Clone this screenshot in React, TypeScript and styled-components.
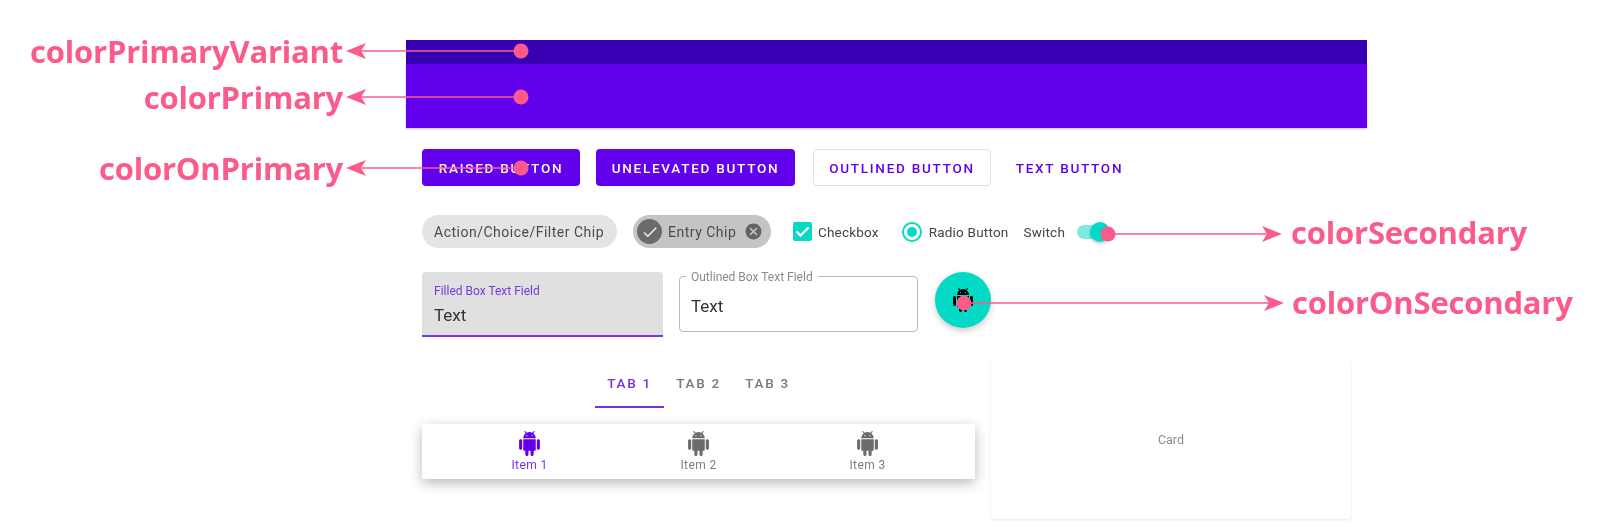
import React from 'react';
import styled, { createGlobalStyle } from 'styled-components';
import { MdCancel, MdCheck } from 'react-icons/md';

const PRIMARY = '#6200ee';
const PRIMARY_VARIANT = '#3700b3';
const SECONDARY = '#03dac5';
const PINK = '#fb5b8a';

const GlobalStyle = createGlobalStyle`
	html, body {
		margin: 0;
		padding: 0;
		background: #fff;
	}
	* {
		box-sizing: border-box;
	}
`;

const Page = styled.div`
	position: relative;
	display: flex;
	width: 1600px;
	height: 527px;
	padding-top: 40px;
	overflow: hidden;
	background: #fff;
	font-family: Roboto, 'Liberation Sans', sans-serif;
	filter: blur(0.45px);
`;

const Gutter = styled.div`
	width: 406px;
	flex: none;
	display: flex;
	flex-direction: column;
	align-items: flex-end;
	padding-right: 63px;
`;

const Label = styled.div<{ $top?: number; $left?: number }>`
	flex: none;
	height: 30px;
	line-height: 30px;
	margin-top: ${(p) => p.$top || 0}px;
	margin-left: ${(p) => p.$left || 0}px;
	font-family: 'Open Sans', 'Noto Sans', sans-serif;
	font-size: 31px;
	font-weight: 700;
	letter-spacing: -0.2px;
	color: ${PINK};
	white-space: nowrap;
`;

const Screen = styled.div`
	width: 961px;
	flex: none;
`;

const StatusBar = styled.div`
	height: 24px;
	background: ${PRIMARY_VARIANT};
`;

const Toolbar = styled.div`
	height: 64px;
	background: ${PRIMARY};
	box-shadow: 0 1px 2px rgba(98, 0, 238, 0.3);
`;

const Content = styled.div`
	display: flex;
	flex-direction: column;
	padding: 21px 16px 0;
`;

const Row = styled.div<{ $top?: number; $align?: string }>`
	display: flex;
	align-items: ${(p) => p.$align || 'center'};
	margin-top: ${(p) => p.$top || 0}px;
`;

const Button = styled.div<{ $variant: 'raised' | 'flat' | 'outlined' | 'text'; $width: number; $left?: number }>`
	flex: none;
	width: ${(p) => p.$width}px;
	height: 37px;
	margin-left: ${(p) => p.$left || 0}px;
	display: flex;
	align-items: center;
	justify-content: center;
	border-radius: 4px;
	font-size: 13.5px;
	font-weight: 500;
	letter-spacing: 1.75px;
	white-space: nowrap;
	background: ${(p) => (p.$variant === 'raised' || p.$variant === 'flat' ? PRIMARY : 'transparent')};
	color: ${(p) => (p.$variant === 'raised' || p.$variant === 'flat' ? '#fff' : PRIMARY)};
	border: ${(p) => (p.$variant === 'outlined' ? '1px solid #e1e1e1' : 'none')};
`;

const Chip = styled.div<{ $entry?: boolean; $width: number; $left?: number }>`
	flex: none;
	width: ${(p) => p.$width}px;
	height: 33px;
	margin-left: ${(p) => p.$left || 0}px;
	display: flex;
	align-items: center;
	padding: 0 0 0 ${(p) => (p.$entry ? 4 : 12)}px;
	border-radius: 17px;
	background: ${(p) => (p.$entry ? '#c4c4c4' : '#e4e4e4')};
	color: #4b4b4b;
	font-size: 14px;
	letter-spacing: 0.5px;
	white-space: nowrap;
`;

const ChipAvatar = styled.span`
	width: 25px;
	height: 25px;
	margin-right: 6px;
	display: flex;
	align-items: center;
	justify-content: center;
	border-radius: 50%;
	background: #6b6b6b;
	color: #eee;
	font-size: 18px;
`;

const ChipClose = styled.span`
	margin-left: 8px;
	display: flex;
	color: #636363;
	font-size: 19px;
`;

const ControlText = styled.span`
	font-size: 13.5px;
	letter-spacing: 0.2px;
	color: #444;
	white-space: nowrap;
`;

const Control = styled.div<{ $gap: number; $left: number }>`
	flex: none;
	display: flex;
	align-items: center;
	gap: ${(p) => p.$gap}px;
	margin-left: ${(p) => p.$left}px;
`;

const CheckBox = styled.span`
	width: 19px;
	height: 19px;
	display: flex;
	align-items: center;
	justify-content: center;
	border-radius: 2px;
	background: ${SECONDARY};
`;

const Radio = styled.span`
	width: 20px;
	height: 20px;
	display: flex;
	align-items: center;
	justify-content: center;
	border: 2px solid ${SECONDARY};
	border-radius: 50%;

	&::after {
		content: '';
		width: 10px;
		height: 10px;
		border-radius: 50%;
		background: ${SECONDARY};
	}
`;

const SwitchTrack = styled.span`
	position: relative;
	width: 28px;
	height: 14px;
	border-radius: 7px;
	background: #7eeadf;
`;

const SwitchThumb = styled.span`
	position: absolute;
	right: -5px;
	top: -3px;
	width: 20px;
	height: 20px;
	border-radius: 50%;
	background: ${SECONDARY};
	box-shadow: 0 2px 3px rgba(0, 0, 0, 0.2);
`;

const FilledField = styled.div`
	flex: none;
	width: 241px;
	height: 65px;
	padding: 12px 12px 0;
	background: #e0e0e0;
	border-radius: 4px 4px 0 0;
	border-bottom: 2px solid #7a35e8;
`;

const FieldCaption = styled.div`
	font-size: 12px;
	line-height: 14px;
	color: #7a35e8;
`;

const FieldValue = styled.div`
	margin-top: 7px;
	font-size: 17px;
	line-height: 20px;
	color: #333;
`;

const OutlinedField = styled.div`
	position: relative;
	flex: none;
	width: 239px;
	height: 56px;
	margin: 4px 0 0 16px;
	padding: 19px 11px 0;
	border: 1.5px solid #b9b9b9;
	border-radius: 4px;
`;

const OutlinedCaption = styled.span`
	position: absolute;
	left: 6px;
	top: -7px;
	padding: 0 5px;
	background: #fff;
	font-size: 12px;
	line-height: 14px;
	color: #8a8a8a;
	white-space: nowrap;
`;

const OutlinedValue = styled(FieldValue)`
	margin-top: 0;
`;

const Fab = styled.div`
	flex: none;
	width: 56px;
	height: 56px;
	margin-left: 17px;
	display: flex;
	align-items: center;
	justify-content: center;
	border-radius: 50%;
	background: ${SECONDARY};
	color: #000;
	box-shadow: 0 3px 6px rgba(0, 0, 0, 0.2);
`;

const Lower = styled.div`
	display: flex;
	gap: 16px;
	align-items: flex-start;
	margin-top: 23px;
`;

const LeftStack = styled.div`
	width: 553px;
	flex: none;
`;

const Tabs = styled.div`
	display: flex;
	height: 48px;
	padding-left: 173px;
`;

const Tab = styled.div<{ $active?: boolean }>`
	width: 69px;
	display: flex;
	align-items: center;
	justify-content: center;
	font-size: 13.5px;
	font-weight: 500;
	letter-spacing: 1.7px;
	color: ${(p) => (p.$active ? '#7a2ee8' : '#7a7a7a')};
	border-bottom: 2px solid ${(p) => (p.$active ? '#7a2ee8' : 'transparent')};
`;

const BottomNav = styled.div`
	display: flex;
	height: 55px;
	margin-top: 16px;
	padding-left: 23px;
	background: #fff;
	box-shadow: 0 4px 12px rgba(0, 0, 0, 0.28);
`;

const NavItem = styled.div<{ $active?: boolean }>`
	width: 169px;
	display: flex;
	flex-direction: column;
	align-items: center;
	padding-top: 7px;
	color: ${(p) => (p.$active ? PRIMARY : '#6b6b6b')};

	svg {
		display: block;
	}
`;

const NavLabel = styled.span<{ $active?: boolean }>`
	margin-top: 2px;
	font-size: 12px;
	line-height: 14px;
	letter-spacing: 0.4px;
	color: ${(p) => (p.$active ? '#7a2ee8' : '#7d7d7d')};
`;

const Card = styled.div`
	width: 361px;
	height: 159px;
	display: flex;
	align-items: center;
	justify-content: center;
	border-radius: 4px;
	background: #fff;
	font-size: 12.5px;
	color: #8b8b8b;
	box-shadow: 0 1px 3px rgba(0, 0, 0, 0.1);
`;

const Annotations = styled.svg`
	position: absolute;
	left: 0;
	top: 0;
`;

const arrows = [
	{ from: 521, to: 346, y: 51 },
	{ from: 521, to: 346, y: 97 },
	{ from: 521, to: 346, y: 168 },
	{ from: 1108, to: 1282, y: 234 },
	{ from: 964, to: 1284, y: 303 },
];

function arrowHead(tip: number, y: number, dir: number) {
	const base = tip + dir * 20;
	const notch = tip + dir * 15;
	return `${tip},${y} ${base},${y - 8} ${notch},${y} ${base},${y + 8}`;
}

// the older material android glyph, the icon package only has the head version
const AndroidIcon = ({ size }: { size: number }) => (
	<svg width={size} height={size} viewBox="0 0 24 24" fill="currentColor">
		<path d="M6 18c0 .55.45 1 1 1h1v3.5c0 .83.67 1.5 1.5 1.5s1.5-.67 1.5-1.5V19h2v3.5c0 .83.67 1.5 1.5 1.5s1.5-.67 1.5-1.5V19h1c.55 0 1-.45 1-1V8H6v10zM3.5 8C2.67 8 2 8.67 2 9.5v7c0 .83.67 1.5 1.5 1.5S5 17.33 5 16.5v-7C5 8.67 4.33 8 3.5 8zm17 0c-.83 0-1.5.67-1.5 1.5v7c0 .83.67 1.5 1.5 1.5s1.5-.67 1.5-1.5v-7c0-.83-.67-1.5-1.5-1.5zm-4.97-5.84l1.3-1.3c.2-.2.2-.51 0-.71-.2-.2-.51-.2-.71 0l-1.48 1.48C13.85 1.23 12.95 1 12 1c-.96 0-1.86.23-2.66.63L7.85.15c-.2-.2-.51-.2-.71 0-.2.2-.2.51 0 .71l1.31 1.31C6.97 3.26 6 5.01 6 7h12c0-1.99-.97-3.75-2.47-4.84zM10 5H9V4h1v1zm5 0h-1V4h1v1z" />
	</svg>
);

const CheckMark = () => (
	<svg width={19} height={19} viewBox="0 0 19 19">
		<path d="M3.5 9.5l4 4 8-8" fill="none" stroke="#fff" strokeWidth={2.4} />
	</svg>
);

export default function App() {
	return (
		<Page>
			<GlobalStyle />
			<Gutter>
				<Label $top={-4}>colorPrimaryVariant</Label>
				<Label $top={16}>colorPrimary</Label>
				<Label $top={41}>colorOnPrimary</Label>
			</Gutter>
			<Screen>
				<StatusBar />
				<Toolbar />
				<Content>
					<Row>
						<Button $variant="raised" $width={158}>RAISED BUTTON</Button>
						<Button $variant="flat" $width={199} $left={16}>UNELEVATED BUTTON</Button>
						<Button $variant="outlined" $width={178} $left={18}>OUTLINED BUTTON</Button>
						<Button $variant="text" $width={125} $left={16}>TEXT BUTTON</Button>
					</Row>
					<Row $top={29}>
						<Chip $width={195}>Action/Choice/Filter Chip</Chip>
						<Chip $entry $width={138} $left={16}>
							<ChipAvatar><MdCheck /></ChipAvatar>
							Entry Chip
							<ChipClose><MdCancel /></ChipClose>
						</Chip>
						<Control $gap={6} $left={22}>
							<CheckBox><CheckMark /></CheckBox>
							<ControlText>Checkbox</ControlText>
						</Control>
						<Control $gap={7} $left={23}>
							<Radio />
							<ControlText>Radio Button</ControlText>
						</Control>
						<Control $gap={12} $left={15}>
							<ControlText>Switch</ControlText>
							<SwitchTrack><SwitchThumb /></SwitchTrack>
						</Control>
						<Label $left={186}>colorSecondary</Label>
					</Row>
					<Row $top={24} $align="flex-start">
						<FilledField>
							<FieldCaption>Filled Box Text Field</FieldCaption>
							<FieldValue>Text</FieldValue>
						</FilledField>
						<OutlinedField>
							<OutlinedCaption>Outlined Box Text Field</OutlinedCaption>
							<OutlinedValue>Text</OutlinedValue>
						</OutlinedField>
						<Fab><AndroidIcon size={24} /></Fab>
						<Label $top={15} $left={301}>colorOnSecondary</Label>
					</Row>
					<Lower>
						<LeftStack>
							<Tabs>
								<Tab $active>TAB 1</Tab>
								<Tab>TAB 2</Tab>
								<Tab>TAB 3</Tab>
							</Tabs>
							<BottomNav>
								<NavItem $active><AndroidIcon size={25} /><NavLabel $active>Item 1</NavLabel></NavItem>
								<NavItem><AndroidIcon size={25} /><NavLabel>Item 2</NavLabel></NavItem>
								<NavItem><AndroidIcon size={25} /><NavLabel>Item 3</NavLabel></NavItem>
							</BottomNav>
						</LeftStack>
						<Card>Card</Card>
					</Lower>
				</Content>
			</Screen>
			<Annotations width={1600} height={527}>
				{arrows.map((a) => {
					const dir = a.to < a.from ? 1 : -1;
					return (
						<g key={a.y} fill={PINK}>
							<line x1={a.from} y1={a.y} x2={a.to + dir * 15} y2={a.y} stroke={PINK} strokeWidth={1.5} />
							<circle cx={a.from} cy={a.y} r={7.5} />
							<polygon points={arrowHead(a.to, a.y, dir)} />
						</g>
					);
				})}
			</Annotations>
		</Page>
	);
}
